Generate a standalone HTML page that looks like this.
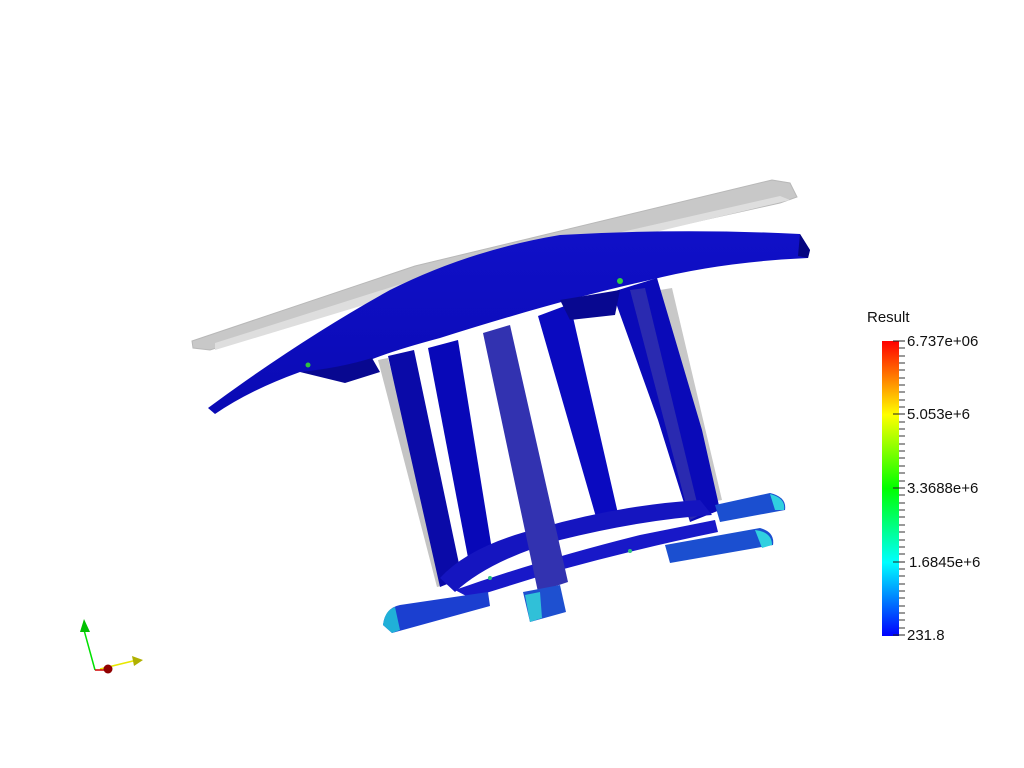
<!DOCTYPE html>
<html><head><style>
html,body{margin:0;padding:0;background:#fff;width:1024px;height:768px;overflow:hidden}
svg{position:absolute;left:0;top:0}
.t{font-family:"Liberation Sans",Arial,sans-serif;font-size:15px;fill:#111}
</style></head><body>
<svg width="1024" height="768" viewBox="0 0 1024 768">
<defs>
<linearGradient id="cb" x1="0" y1="1" x2="0" y2="0">
<stop offset="0" stop-color="#0000ff"/><stop offset="0.25" stop-color="#00ffff"/>
<stop offset="0.5" stop-color="#00ff00"/><stop offset="0.75" stop-color="#ffff00"/>
<stop offset="1" stop-color="#ff0000"/></linearGradient>
<linearGradient id="roof" x1="0" y1="0" x2="0" y2="1">
<stop offset="0" stop-color="#1010c8"/><stop offset="1" stop-color="#0a0ab4"/></linearGradient>
</defs>
<polygon points="192,341 415,266 772,180 790,183 797,197 780,203 420,283 210,350 193,348" fill="#c8c8c8" stroke="#b8b8b8" stroke-width="1"/>
<polygon points="215,343 420,278 780,196 790,200 420,288 215,350" fill="#dedede"/>
<polygon points="378,360 388,358 445,585 437,587" fill="#c4c4c4"/>
<polygon points="660,290 672,288 722,500 712,502" fill="#c8c8c8"/>
<polygon points="388,356 414,350 462,578 440,587" fill="#0a0aa8"/>
<polygon points="428,348 458,340 494,562 470,568" fill="#0808b8"/>
<polygon points="538,316 570,304 619,518 598,524" fill="#0a0ac0"/>
<polygon points="612,292 657,278 702,430 720,510 690,522 658,420" fill="#0a0ab8"/>
<polygon points="630,290 645,288 700,515 690,520" fill="#2a2ab0"/>
<path d="M440,578 Q470,545 540,528 Q620,505 700,500 L712,515 Q640,520 560,540 Q490,560 455,592 Z" fill="#1515c0"/>
<path d="M455,590 Q540,560 640,535 L715,520 L718,532 Q640,548 560,570 L470,598 Z" fill="#1818c8"/>
<polygon points="483,333 510,325 568,582 538,592" fill="#3232b0"/>
<path d="M383,625 Q385,608 400,605 L488,592 L490,606 L392,633 Z" fill="#1b3fd0"/>
<path d="M383,625 Q385,610 395,607 L400,630 L392,633 Z" fill="#20b0d8"/>
<path d="M523,592 L560,585 L566,612 L530,622 Z" fill="#1e50d0"/>
<path d="M525,595 L540,592 L542,618 L530,622 Z" fill="#30c0d8"/>
<path d="M665,545 L760,528 Q775,532 773,545 L670,563 Z" fill="#1b4fd0"/>
<path d="M755,530 Q772,532 772,545 L762,548 Z" fill="#30d0e0"/>
<path d="M715,505 L770,493 Q787,497 785,510 L720,522 Z" fill="#1b4fd0"/>
<path d="M770,494 Q786,498 784,510 L775,510 Z" fill="#30d0e0"/>
<path d="M208,408 Q300,340 390,290 Q470,250 560,235 Q680,228 800,234 L810,250 L808,258 Q720,262 650,280 Q560,300 440,338 Q395,350 370,360 Q330,372 300,372 Q250,390 215,414 Z" fill="url(#roof)"/>
<path d="M800,234 L810,250 L808,258 L798,256 Z" fill="#050580"/>
<path d="M300,372 Q340,368 372,358 L380,372 L345,383 Z" fill="#080890"/>
<path d="M560,300 L620,290 L615,315 L570,320 Z" fill="#080890"/>
<circle cx="620" cy="281" r="3" fill="#30d040"/>
<circle cx="308" cy="365" r="2.5" fill="#30c040"/>
<circle cx="630" cy="551" r="2" fill="#30c080"/>
<circle cx="490" cy="578" r="2" fill="#30c080"/>
<line x1="95" y1="670" x2="84" y2="630" stroke="#00e000" stroke-width="1.5"/>
<polygon points="80,632 84,619 90,632" fill="#00c000"/>
<line x1="100" y1="669" x2="137" y2="660" stroke="#e8e800" stroke-width="1.5"/>
<polygon points="132,656 143,660 134,666" fill="#b0b000"/>
<line x1="95" y1="670" x2="104" y2="670" stroke="#d00000" stroke-width="1.5"/>
<circle cx="108" cy="669" r="4.5" fill="#900000"/>
<rect x="882" y="341" width="17" height="295" fill="url(#cb)"/>
<g stroke="#222" stroke-width="1">
<line x1="893" y1="341" x2="905" y2="341"/>
<line x1="893" y1="635" x2="905" y2="635"/>
<line x1="893" y1="414" x2="905" y2="414"/>
<line x1="893" y1="488" x2="905" y2="488"/>
<line x1="893" y1="562" x2="905" y2="562"/>
</g>
<g stroke="#333" stroke-width="1">
<line x1="899" y1="348" x2="905" y2="348"/><line x1="899" y1="356" x2="905" y2="356"/><line x1="899" y1="363" x2="905" y2="363"/><line x1="899" y1="370" x2="905" y2="370"/><line x1="899" y1="378" x2="905" y2="378"/><line x1="899" y1="385" x2="905" y2="385"/><line x1="899" y1="392" x2="905" y2="392"/><line x1="899" y1="400" x2="905" y2="400"/><line x1="899" y1="407" x2="905" y2="407"/>
<line x1="899" y1="422" x2="905" y2="422"/><line x1="899" y1="429" x2="905" y2="429"/><line x1="899" y1="436" x2="905" y2="436"/><line x1="899" y1="444" x2="905" y2="444"/><line x1="899" y1="451" x2="905" y2="451"/><line x1="899" y1="458" x2="905" y2="458"/><line x1="899" y1="466" x2="905" y2="466"/><line x1="899" y1="473" x2="905" y2="473"/><line x1="899" y1="481" x2="905" y2="481"/>
<line x1="899" y1="495" x2="905" y2="495"/><line x1="899" y1="503" x2="905" y2="503"/><line x1="899" y1="510" x2="905" y2="510"/><line x1="899" y1="517" x2="905" y2="517"/><line x1="899" y1="525" x2="905" y2="525"/><line x1="899" y1="532" x2="905" y2="532"/><line x1="899" y1="540" x2="905" y2="540"/><line x1="899" y1="547" x2="905" y2="547"/><line x1="899" y1="554" x2="905" y2="554"/>
<line x1="899" y1="569" x2="905" y2="569"/><line x1="899" y1="576" x2="905" y2="576"/><line x1="899" y1="584" x2="905" y2="584"/><line x1="899" y1="591" x2="905" y2="591"/><line x1="899" y1="598" x2="905" y2="598"/><line x1="899" y1="606" x2="905" y2="606"/><line x1="899" y1="613" x2="905" y2="613"/><line x1="899" y1="620" x2="905" y2="620"/><line x1="899" y1="628" x2="905" y2="628"/>
</g>
<text class="t" x="867" y="322">Result</text>
<text class="t" x="907" y="346">6.737e+06</text>
<text class="t" x="907" y="419">5.053e+6</text>
<text class="t" x="907" y="493">3.3688e+6</text>
<text class="t" x="909" y="567">1.6845e+6</text>
<text class="t" x="907" y="640">231.8</text>
</svg>
</body></html>
